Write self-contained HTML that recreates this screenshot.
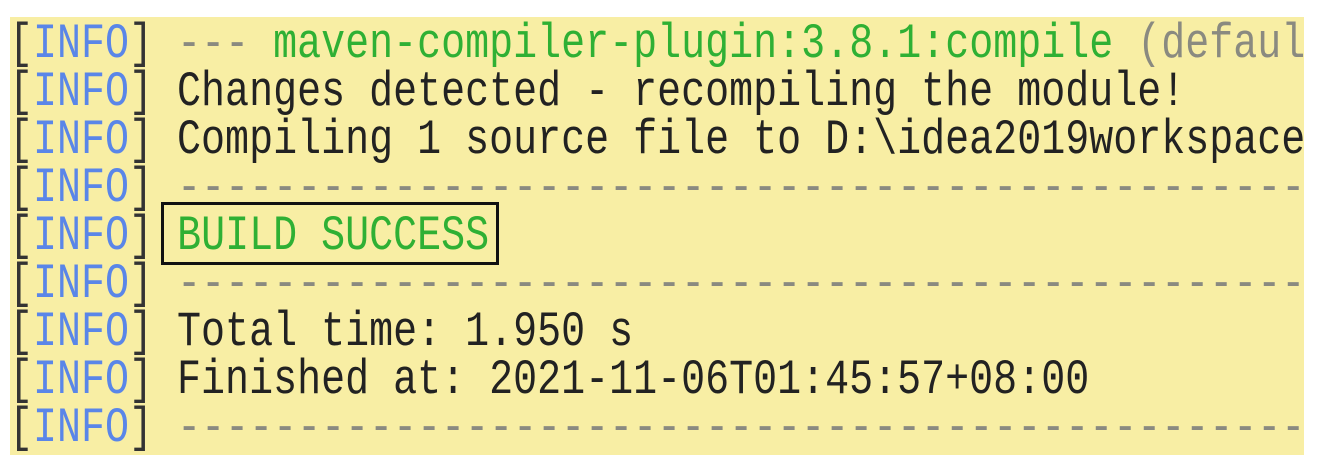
<!DOCTYPE html>
<html><head><style>
html,body{margin:0;padding:0;background:#fff;width:1326px;height:472px;overflow:hidden}
#p{position:absolute;left:10px;top:17px;width:1294px;height:438px;background:#f8eea4;overflow:hidden}
.l{position:absolute;left:-1px;height:48px;line-height:48px;white-space:pre;font-family:"Liberation Mono",monospace;font-size:40px;color:#222;transform:scaleY(1.22);transform-origin:0 50%}
.i{color:#5a86e8}.b{color:#333}.g{color:#2fb034}.gr{color:#8a8a80}
#box{position:absolute;left:151px;top:185px;width:332px;height:57px;border:3px solid #111}
</style></head><body>
<div id="p">
<div class="l" style="top:5px"><span class="b">[</span><span class="i">INFO</span><span class="b">]</span> <span class="gr">---</span> <span class="g">maven-compiler-plugin:3.8.1:compile</span> <span class="gr">(defaul</span></div>
<div class="l" style="top:53px"><span class="b">[</span><span class="i">INFO</span><span class="b">]</span> Changes detected - recompiling the module!</div>
<div class="l" style="top:101px"><span class="b">[</span><span class="i">INFO</span><span class="b">]</span> Compiling 1 source file to D:\idea2019workspace</div>
<div class="l" style="top:149px"><span class="b">[</span><span class="i">INFO</span><span class="b">]</span> <span class="gr">--------------------------------------------------------</span></div>
<div class="l" style="top:197px"><span class="b">[</span><span class="i">INFO</span><span class="b">]</span> <span class="g">BUILD SUCCESS</span></div>
<div class="l" style="top:245px"><span class="b">[</span><span class="i">INFO</span><span class="b">]</span> <span class="gr">--------------------------------------------------------</span></div>
<div class="l" style="top:293px"><span class="b">[</span><span class="i">INFO</span><span class="b">]</span> Total time: 1.950 s</div>
<div class="l" style="top:341px"><span class="b">[</span><span class="i">INFO</span><span class="b">]</span> Finished at: 2021-11-06T01:45:57+08:00</div>
<div class="l" style="top:389px"><span class="b">[</span><span class="i">INFO</span><span class="b">]</span> <span class="gr">--------------------------------------------------------</span></div>
<div id="box"></div>
</div>
</body></html>
